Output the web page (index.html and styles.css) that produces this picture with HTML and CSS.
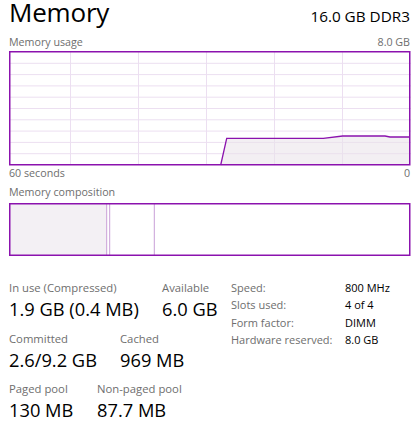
FILE: index.html
```html
<!DOCTYPE html>
<html>
<head>
<meta charset="utf-8">
<link rel="stylesheet" href="styles.css">
</head>
<body>
<div class="panel">
  <div class="header">
    <div class="title">Memory</div>
    <div class="spec">16.0 GB DDR3</div>
  </div>
  <div class="caption top-cap"><span>Memory usage</span><span>8.0 GB</span></div>
  <svg class="chart" width="402" height="115" viewBox="0 0 402 115">
    <g class="grid">
      <line x1="61.5" y1="0" x2="61.5" y2="114"/>
      <line x1="129.5" y1="0" x2="129.5" y2="114"/>
      <line x1="197.5" y1="0" x2="197.5" y2="114"/>
      <line x1="265.5" y1="0" x2="265.5" y2="114"/>
      <line x1="333.5" y1="0" x2="333.5" y2="114"/>
      <line x1="0" y1="12.3" x2="402" y2="12.3"/>
      <line x1="0" y1="23.6" x2="402" y2="23.6"/>
      <line x1="0" y1="34.9" x2="402" y2="34.9"/>
      <line x1="0" y1="46.2" x2="402" y2="46.2"/>
      <line x1="0" y1="57.5" x2="402" y2="57.5"/>
      <line x1="0" y1="68.8" x2="402" y2="68.8"/>
      <line x1="0" y1="80.1" x2="402" y2="80.1"/>
      <line x1="0" y1="91.4" x2="402" y2="91.4"/>
      <line x1="0" y1="102.7" x2="402" y2="102.7"/>
    </g>
    <polygon class="area" points="211.7,114 217.7,87.3 314.3,87.3 333.7,85 376,85 381,86 401,86 401,114"/>
    <polyline class="data" points="211.7,114 217.7,87.3 314.3,87.3 333.7,85 376,85 381,86 401,86"/>
    <rect class="frame" x="0.75" y="0.75" width="400" height="113"/>
  </svg>
  <div class="caption axis"><span>60 seconds</span><span>0</span></div>
  <div class="caption comp-cap"><span>Memory composition</span></div>
  <svg class="comp" width="402" height="53" viewBox="0 0 402 53">
    <rect class="inuse" x="0.75" y="0.75" width="97" height="51.5"/>
    <line class="seg" x1="97.7" y1="0" x2="97.7" y2="53"/>
    <line class="seg" x1="100.7" y1="0" x2="100.7" y2="53"/>
    <line class="seg" x1="145.3" y1="0" x2="145.3" y2="53"/>
    <rect class="frame" x="0.75" y="0.75" width="400" height="51.5"/>
  </svg>
  <div class="stats">
    <div class="left">
      <div class="row">
        <div class="stat w1"><div class="lbl">In use (Compressed)</div><div class="val">1.9 GB (0.4 MB)</div></div>
        <div class="stat"><div class="lbl">Available</div><div class="val">6.0 GB</div></div>
      </div>
      <div class="row">
        <div class="stat w2"><div class="lbl">Committed</div><div class="val">2.6/9.2 GB</div></div>
        <div class="stat"><div class="lbl">Cached</div><div class="val">969 MB</div></div>
      </div>
      <div class="row">
        <div class="stat w3"><div class="lbl">Paged pool</div><div class="val">130 MB</div></div>
        <div class="stat"><div class="lbl">Non-paged pool</div><div class="val">87.7 MB</div></div>
      </div>
    </div>
    <div class="props">
      <div class="k">Speed:</div><div class="v">800 MHz</div>
      <div class="k">Slots used:</div><div class="v">4 of 4</div>
      <div class="k">Form factor:</div><div class="v">DIMM</div>
      <div class="k">Hardware reserved:</div><div class="v">8.0 GB</div>
    </div>
  </div>
</div>
</body>
</html>
```

FILE: styles.css
```css
html, body {
  margin: 0;
  padding: 0;
  background: #ffffff;
}
body {
  font-family: "Open Sans", "Noto Sans", sans-serif;
  color: #000;
  width: 416px;
  height: 440px;
  overflow: hidden;
}
.panel {
  padding-left: 9px;
  width: 402px;
}
.header {
  display: flex;
  justify-content: space-between;
  align-items: baseline;
  height: 24px;
}
.title {
  font-size: 26px;
  line-height: 24px;
  letter-spacing: -0.2px;
}
.spec {
  font-size: 15.3px;
  line-height: 24px;
  padding-right: 1px;
}
.caption {
  display: flex;
  justify-content: space-between;
  font-size: 10.7px;
  line-height: 14px;
  color: #6e6e6e;
  padding-right: 1px;
}
.top-cap {
  margin-top: 10.6px;
  margin-bottom: 2.4px;
}
.chart, .comp {
  display: block;
}
.grid line {
  stroke: #ecdff1;
  stroke-width: 1;
}
.area {
  fill: #e9e2ea;
  fill-opacity: 0.55;
}
.data {
  fill: none;
  stroke: #8b12ae;
  stroke-width: 1.3;
}
.frame {
  fill: none;
  stroke: #8b12ae;
  stroke-width: 1.5;
}
.axis {
  margin-top: 0.5px;
}
.comp-cap {
  margin-top: 5px;
}
.comp {
  margin-top: 4px;
}
.inuse {
  fill: #f3f0f4;
}
.seg {
  stroke: #c99fd7;
  stroke-width: 1;
}
.stats {
  display: flex;
  align-items: flex-start;
  margin-top: 23.9px;
}
.left {
  display: flex;
  flex-direction: column;
  gap: 7px;
  width: 222px;
}
.row {
  display: flex;
}
.w1 { width: 153px; }
.w2 { width: 111px; }
.w3 { width: 88px; }
.lbl {
  font-size: 11.3px;
  line-height: 15px;
  color: #6e6e6e;
}
.val {
  font-size: 18.3px;
  line-height: 28.4px;
}
.props {
  display: grid;
  grid-template-columns: 114px auto;
  font-size: 11px;
  line-height: 17.4px;
  margin-top: -1.7px;
}
.k { color: #6e6e6e; }
.v { color: #000; }
```
